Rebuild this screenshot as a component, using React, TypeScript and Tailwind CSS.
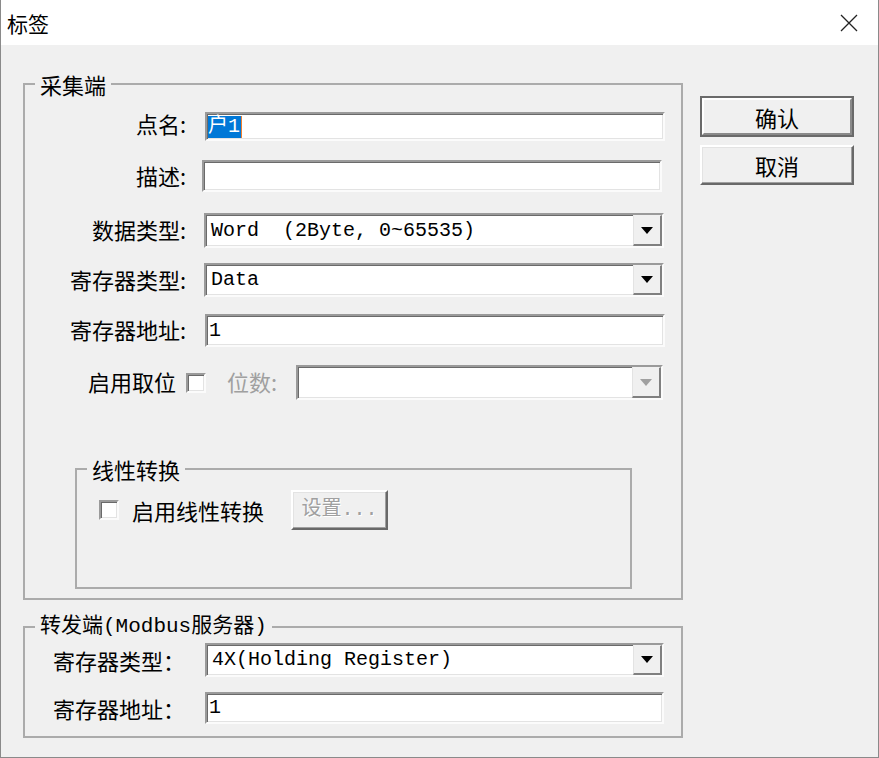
import React from "react";

const cjk = "font-['Noto_Sans_CJK_SC',sans-serif]";
const mono = "font-['Liberation_Mono','Noto_Sans_CJK_SC',monospace]";

const sunken =
  "bg-white border-2 border-t-[#9a9a9a] border-l-[#9a9a9a] border-b-[#fbfbfb] border-r-[#fbfbfb] shadow-[inset_1px_1px_0_#6a6a6a,inset_-1px_-1px_0_#e3e3e3]";

const raised =
  "bg-[#f0f0f0] border-2 border-t-[#ffffff] border-l-[#ffffff] border-b-[#696969] border-r-[#696969] shadow-[inset_-1px_-1px_0_#a0a0a0,inset_1px_1px_0_#e3e3e3]";

function Arrow({ disabled }: { disabled?: boolean }) {
  return (
    <svg width="12" height="7" viewBox="0 0 12 7">
      <polygon points="0,0 12,0 6,7" fill={disabled ? "#a0a0a0" : "#000000"} />
    </svg>
  );
}

function DropBtn({ disabled }: { disabled?: boolean }) {
  return (
    <div className="h-full w-[29px] shrink-0 bg-[#f0f0f0] border-l border-t border-l-[#e3e3e3] border-t-[#f0f0f0] border-b-2 border-r-2 border-b-[#808080] border-r-[#808080] flex items-center justify-center">
      <Arrow disabled={disabled} />
    </div>
  );
}

export default function App() {
  return (
    <div
      className={`w-[879px] h-[758px] bg-[#f0f0f0] border-x border-b border-[#8a8a8a] flex flex-col overflow-hidden text-black ${cjk} text-[22px] leading-[24px]`}
    >
      {/* title bar */}
      <div className="h-[45px] bg-white flex items-center justify-between shrink-0">
        <span className="pl-[6px] text-[21px]">标签</span>
        <svg width="18" height="18" viewBox="0 0 18 18" className="mr-[20px]">
          <path d="M1 1L17 17M17 1L1 17" stroke="#222222" strokeWidth="1.3" fill="none" />
        </svg>
      </div>

      <div className="flex">
        {/* left column */}
        <div className="ml-[22px] w-[660px]">
          {/* 采集端 */}
          <fieldset className="mt-[27px] h-[528px] w-[660px] border-2 border-[#ababab]">
            <legend className="ml-[10px] px-[5px] leading-[24px]">采集端</legend>

            <div className="mt-[16px] h-[29px] flex items-center">
              <div className="w-[161px] text-right pb-[8px]">点名:</div>
              <div className={`ml-[19px] w-[460px] h-full ${sunken} flex items-center pl-[1px]`}>
                <span className={`${mono} text-[20px] leading-[22px] bg-[#0078d7] text-white pr-[1px]`}>户1</span>
                <span className="w-[1px] h-[22px] bg-[#f08030]" />
              </div>
            </div>

            <div className="mt-[19px] h-[32px] flex items-center">
              <div className="w-[161px] text-right pb-[3px]">描述:</div>
              <div className={`ml-[16px] w-[460px] h-full ${sunken}`} />
            </div>

            <div className="mt-[21px] h-[35px] flex items-center">
              <div className="w-[161px] text-right pb-[3px]">数据类型:</div>
              <div className={`ml-[18px] w-[460px] h-full ${sunken} flex items-center`}>
                <span className={`flex-1 pl-[5px] ${mono} text-[20px] whitespace-pre`}>Word  (2Byte, 0~65535)</span>
                <DropBtn />
              </div>
            </div>

            <div className="mt-[15px] h-[34px] flex items-center">
              <div className="w-[161px] text-right pb-[3px]">寄存器类型:</div>
              <div className={`ml-[18px] w-[460px] h-full ${sunken} flex items-center`}>
                <span className={`flex-1 pl-[5px] ${mono} text-[20px]`}>Data</span>
                <DropBtn />
              </div>
            </div>

            <div className="mt-[17px] h-[33px] flex items-center">
              <div className="w-[161px] text-right pb-[3px]">寄存器地址:</div>
              <div className={`ml-[19px] w-[460px] h-full ${sunken} flex items-center`}>
                <span className={`pl-[2px] ${mono} text-[20px]`}>1</span>
              </div>
            </div>

            <div className="mt-[18px] h-[35px] flex items-center">
              <div className="w-[151px] text-right pb-[3px]">启用取位</div>
              <div className={`ml-[10px] w-[20px] h-[20px] ${sunken}`} />
              <div className="ml-[21px] w-[69px] text-[#a0a0a0] pb-[3px]">位数:</div>
              <div className={`w-[367px] h-full ${sunken} flex items-center justify-end`}>
                <DropBtn disabled />
              </div>
            </div>

            {/* 线性转换 */}
            <fieldset className="mt-[57px] ml-[50px] w-[557px] h-[132px] border-2 border-[#ababab]">
              <legend className="ml-[10px] px-[5px] leading-[24px]">线性转换</legend>
              <div className="mt-[9px] h-[40px] flex items-center">
                <div className={`ml-[22px] w-[20px] h-[20px] ${sunken}`} />
                <div className="ml-[13px] w-[159px]">启用线性转换</div>
                <div
                  className={`w-[97px] h-[40px] ${raised} flex items-center justify-center text-[#a0a0a0] [text-shadow:1px_1px_0_#ffffff] ${mono} text-[20px]`}
                >
                  设置...
                </div>
              </div>
            </fieldset>
          </fieldset>

          {/* 转发端 */}
          <fieldset className="mt-[15px] h-[123px] w-[660px] border-2 border-[#ababab]">
            <legend className={`ml-[10px] px-[5px] leading-[24px] ${mono} text-[21px]`}>转发端(Modbus服务器)</legend>
            <div className="mt-[4px] h-[34px] flex items-center pl-[28px]">
              <div className="w-[152px]">寄存器类型：</div>
              <div className={`w-[459px] h-full ${sunken} flex items-center`}>
                <span className={`flex-1 pl-[5px] ${mono} text-[20px]`}>4X(Holding Register)</span>
                <DropBtn />
              </div>
            </div>
            <div className="mt-[15px] h-[32px] flex items-center pl-[28px]">
              <div className="w-[152px]">寄存器地址：</div>
              <div className={`w-[459px] h-full ${sunken} flex items-center`}>
                <span className={`pl-[2px] ${mono} text-[20px]`}>1</span>
              </div>
            </div>
          </fieldset>
        </div>

        {/* right column */}
        <div className="ml-[17px] mt-[51px] w-[154px] flex flex-col">
          <div className="h-[41px] border-2 border-[#6a6a6a]">
            <div className="h-full bg-[#f0f0f0] border-2 border-t-[#ffffff] border-l-[#ffffff] border-b-[#8a8a8a] border-r-[#8a8a8a] flex items-center justify-center">
              确认
            </div>
          </div>
          <div className={`mt-[8px] h-[40px] ${raised} flex items-center justify-center`}>取消</div>
        </div>
      </div>
    </div>
  );
}
